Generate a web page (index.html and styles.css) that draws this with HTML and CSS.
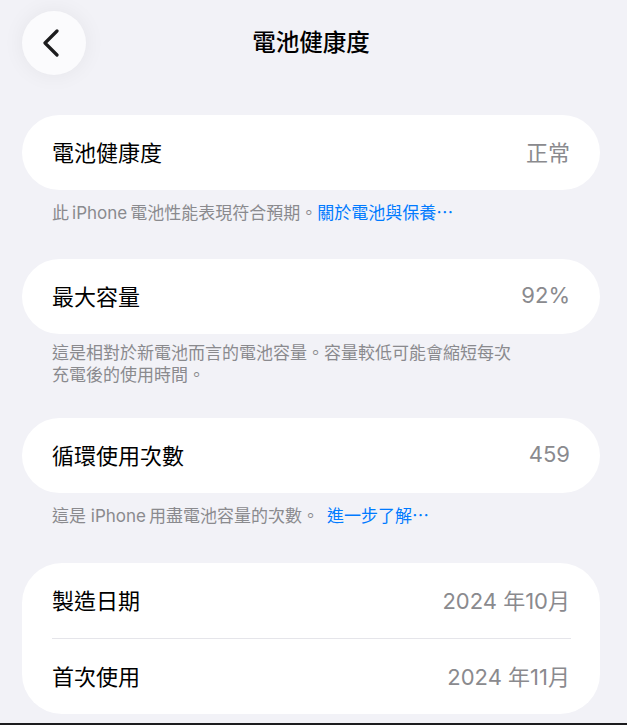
FILE: index.html
```html
<!DOCTYPE html>
<html lang="zh-Hant">
  <head>
    <meta charset="UTF-8" />
    <meta name="viewport" content="width=device-width, initial-scale=1.0" />
    <title>電池健康度</title>
    <link rel="stylesheet" href="styles.css">
  </head>
  <body>
    <!-- Navigation bar -->
    <div class="nav-bar">
      <button class="back-button" type="button" aria-label="返回">
        <svg width="20" height="28" viewBox="0 0 20 28">
          <path d="M15 2 L3 14 L15 26" fill="none" stroke="#1c1c1e" stroke-width="3.2" stroke-linecap="round" stroke-linejoin="round" />
        </svg>
      </button>
      <h1 class="nav-title">電池健康度</h1>
    </div>

    <!-- Battery health -->
    <div class="card">
      <div class="row">
        <span class="row-label">電池健康度</span>
        <span class="row-value">正常</span>
      </div>
    </div>
    <p class="caption">此&thinsp;iPhone&thinsp;電池性能表現符合預期。<a href="#" class="link">關於電池與保養⋯</a></p>

    <!-- Maximum capacity -->
    <div class="card">
      <div class="row">
        <span class="row-label">最大容量</span>
        <span class="row-value">92%</span>
      </div>
    </div>
    <p class="caption caption-multi">這是相對於新電池而言的電池容量。容量較低可能會縮短每次充電後的使用時間。</p>

    <!-- Cycle count -->
    <div class="card">
      <div class="row">
        <span class="row-label">循環使用次數</span>
        <span class="row-value">459</span>
      </div>
    </div>
    <p class="caption caption-last">這是 iPhone&thinsp;用盡電池容量的次數。 &thinsp;<a href="#" class="link">進一步了解⋯</a></p>

    <!-- Dates -->
    <div class="card card-group">
      <div class="row">
        <span class="row-label">製造日期</span>
        <span class="row-value">2024 年10月</span>
      </div>
      <div class="divider"></div>
      <div class="row">
        <span class="row-label">首次使用</span>
        <span class="row-value">2024 年11月</span>
      </div>
    </div>

    <div class="bottom-edge"></div>
  </body>
</html>
```

FILE: styles.css
```css
body {
  margin: 0;
  padding: 0 27px 0 22px;
  background-color: #f2f2f7;
  font-family: "Inter", "Noto Sans CJK TC", sans-serif;
  color: #000;
}

/* Navigation bar */
.nav-bar {
  position: relative;
  height: 64px;
  padding-top: 11px;
  margin-bottom: 40px;
  display: flex;
  align-items: center;
  justify-content: center;
}

.back-button {
  position: absolute;
  left: 0;
  top: 11px;
  width: 64px;
  height: 64px;
  border: none;
  border-radius: 50%;
  background-color: #fbfbfd;
  box-shadow: 0 0 22px rgba(0, 0, 0, 0.06);
  display: flex;
  align-items: center;
  justify-content: center;
  padding: 0 4px 0 0;
  cursor: pointer;
}

.nav-title {
  margin: 0;
  font-size: 23.5px;
  font-weight: 500;
  line-height: 64px;
}

/* Cards */
.card {
  background-color: #fff;
  border-radius: 38px;
}

.card-group {
  border-radius: 40px;
}

.row {
  box-sizing: border-box;
  height: 75px;
  padding: 0 30px 4px;
  display: flex;
  align-items: center;
  justify-content: space-between;
}

.row-label {
  font-size: 22px;
}

.row-value {
  font-size: 22px;
  color: #8a8a8e;
}

.divider {
  height: 1px;
  margin: 0 29px 0 30px;
  background-color: #e5e5ea;
}

/* Captions under cards */
.caption {
  margin: 13px 0 35px;
  padding-left: 30px;
  max-width: 470px;
  font-size: 17px;
  line-height: 21px;
  color: #8a8a8e;
}

.caption-multi {
  margin: 9px 0 32px;
  line-height: 21.5px;
}

.caption-last {
  margin-bottom: 36px;
}

.link {
  color: #007aff;
  text-decoration: none;
}

.bottom-edge {
  margin: 9px -27px 0 -22px;
  height: 2px;
  background-color: #1c1c1e;
}
```
